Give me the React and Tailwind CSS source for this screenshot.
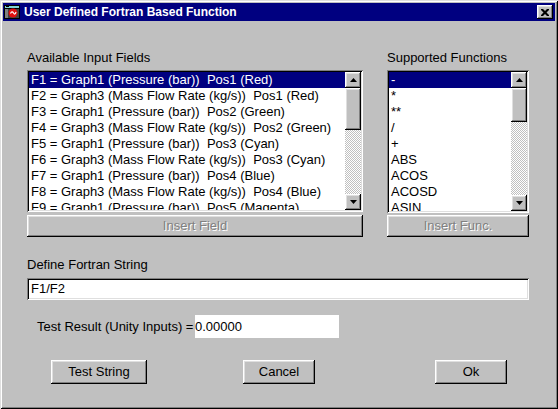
import React from 'react';

const raised = 'shadow-[inset_-1px_-1px_0_#000,inset_1px_1px_0_#fff,inset_-2px_-2px_0_#808080,inset_2px_2px_0_#dfdfdf]';
const sunken = 'shadow-[inset_1px_1px_0_#808080,inset_-1px_-1px_0_#fff,inset_2px_2px_0_#000,inset_-2px_-2px_0_#dfdfdf]';
const dither = 'bg-[repeating-conic-gradient(#c0c0c0_0_25%,#ffffff_0_50%)] bg-[length:2px_2px]';

const FIELDS = [
  'F1 = Graph1 (Pressure (bar))  Pos1 (Red)',
  'F2 = Graph3 (Mass Flow Rate (kg/s))  Pos1 (Red)',
  'F3 = Graph1 (Pressure (bar))  Pos2 (Green)',
  'F4 = Graph3 (Mass Flow Rate (kg/s))  Pos2 (Green)',
  'F5 = Graph1 (Pressure (bar))  Pos3 (Cyan)',
  'F6 = Graph3 (Mass Flow Rate (kg/s))  Pos3 (Cyan)',
  'F7 = Graph1 (Pressure (bar))  Pos4 (Blue)',
  'F8 = Graph3 (Mass Flow Rate (kg/s))  Pos4 (Blue)',
  'F9 = Graph1 (Pressure (bar))  Pos5 (Magenta)',
];

const FUNCS = ['-', '*', '**', '/', '+', 'ABS', 'ACOS', 'ACOSD', 'ASIN'];

function Arrow({ down }) {
  return (
    <svg width="7" height="4" viewBox="0 0 7 4">
      {down
        ? <polygon points="0,0 7,0 3.5,4" fill="#000" />
        : <polygon points="3.5,0 7,4 0,4" fill="#000" />}
    </svg>
  );
}

function ScrollBar({ thumb }) {
  return (
    <div className="w-[16px] flex flex-col shrink-0">
      <div className={`h-[16px] bg-[#c0c0c0] flex items-center justify-center ${raised}`}><Arrow /></div>
      <div className={`bg-[#c0c0c0] ${raised}`} style={{ height: thumb }} />
      <div className={`flex-1 ${dither}`} />
      <div className={`h-[16px] bg-[#c0c0c0] flex items-center justify-center ${raised}`}><Arrow down /></div>
    </div>
  );
}

function ListBox({ items, width, height, thumb }) {
  return (
    <div className={`bg-white p-[2px] flex ${sunken}`} style={{ width, height }}>
      <div className="flex-1 overflow-hidden">
        {items.map((it, i) => (
          <div
            key={i}
            className={`h-[16px] leading-[16px] pl-[2px] whitespace-pre ${i === 0 ? 'bg-[#000080] text-white' : 'text-black'}`}
          >
            {it}
          </div>
        ))}
      </div>
      <ScrollBar thumb={thumb} />
    </div>
  );
}

function Btn({ children, className = '', disabled }) {
  return (
    <div className={`bg-[#c0c0c0] flex items-center justify-center ${raised} ${className}`}>
      <span className={disabled ? 'text-[#808080] [text-shadow:1px_1px_0_#fff]' : 'text-black'}>{children}</span>
    </div>
  );
}

function TitleIcon() {
  return (
    <svg width="16" height="16" viewBox="0 0 16 16">
      <rect x="0" y="1" width="16" height="14" fill="#000" />
      <rect x="1" y="2" width="14" height="2" fill="#7fd4d4" />
      <rect x="2" y="2" width="3" height="1" fill="#000" />
      <rect x="1" y="5" width="14" height="9" fill="#404040" />
      <rect x="1" y="5" width="3" height="9" fill="#808080" />
      <circle cx="9" cy="9" r="4.5" fill="#e01010" />
      <path d="M6.5 9.5 Q8 6.5 9.5 9 T12 8" stroke="#fff" strokeWidth="1.2" fill="none" />
    </svg>
  );
}

export default function App() {
  return (
    <div className={`w-[558px] h-[409px] bg-[#c0c0c0] p-[3px] flex flex-col font-['Liberation_Sans',Arial,sans-serif] text-[13px] shadow-[inset_1px_1px_0_#dfdfdf,inset_-1px_-1px_0_#000,inset_2px_2px_0_#fff,inset_-2px_-2px_0_#808080]`}>
      <div className="h-[18px] bg-[#000080] flex items-center pl-[1px] pr-[2px] shrink-0">
        <TitleIcon />
        <span className="ml-[4px] text-white font-bold text-[12px] leading-none">User Defined Fortran Based Function</span>
        <div className={`ml-auto w-[16px] h-[14px] bg-[#c0c0c0] flex items-center justify-center ${raised}`}>
          <svg width="8" height="7" viewBox="0 0 8 7">
            <path d="M0 0h2l2 2 2-2h2v1L5.5 3.5 8 6v1H6L4 5 2 7H0V6l2.5-2.5L0 1z" fill="#000" />
          </svg>
        </div>
      </div>

      <div className="pl-[24px] pt-[29px] flex flex-col">
        <div className="flex gap-[24px]">
          <div className="flex flex-col w-[336px]">
            <div className="h-[16px] leading-[16px]">Available Input Fields</div>
            <div className="mt-[4px]">
              <ListBox items={FIELDS} width={336} height={142} thumb={42} />
            </div>
            <Btn disabled className="mt-[3px] h-[22px] w-[336px]">Insert Field</Btn>
          </div>
          <div className="flex flex-col w-[142px]">
            <div className="h-[16px] leading-[16px]">Supported Functions</div>
            <div className="mt-[4px]">
              <ListBox items={FUNCS} width={142} height={143} thumb={34} />
            </div>
            <Btn disabled className="mt-[2px] h-[22px] w-[142px]">Insert Func.</Btn>
          </div>
        </div>

        <div className="mt-[20px] h-[16px] leading-[16px]">Define Fortran String</div>
        <div className={`mt-[5px] w-[502px] h-[22px] bg-white flex items-center pl-[4px] ${sunken}`}>F1/F2</div>

        <div className="mt-[15px] ml-[10px] flex items-center">
          <span className="w-[158px] whitespace-pre">Test Result (Unity Inputs) =</span>
          <div className="w-[144px] h-[23px] bg-white flex items-center">0.00000</div>
        </div>

        <div className="mt-[22px] flex">
          <Btn className="ml-[24px] w-[96px] h-[24px]">Test String</Btn>
          <Btn className="ml-[96px] w-[72px] h-[24px]">Cancel</Btn>
          <Btn className="ml-[120px] w-[72px] h-[24px]">Ok</Btn>
        </div>
      </div>
    </div>
  );
}
